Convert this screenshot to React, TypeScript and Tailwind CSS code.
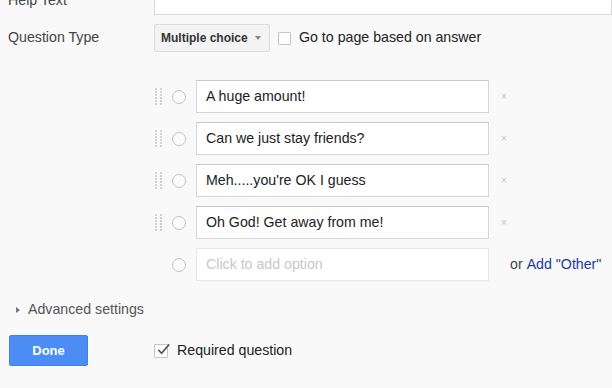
import React from "react";

function DragHandle() {
  const dots = Array.from({ length: 12 });
  return (
    <div className="grid grid-cols-2 gap-x-[3px] gap-y-[1px] w-[7px]">
      {dots.map((_, i) => (
        <span key={i} className="block w-[2px] h-[2px] bg-[#d3d3d3]" />
      ))}
    </div>
  );
}

function Radio() {
  return <span className="block w-[14px] h-[14px] rounded-full border border-[#c2c2c2] bg-[#fbfbfb]" />;
}

const options = [
  "A huge amount!",
  "Can we just stay friends?",
  "Meh.....you're OK I guess",
  "Oh God! Get away from me!",
];

export default function App() {
  return (
    <div
      className="w-[612px] h-[388px] overflow-hidden bg-[#f9f9f9] text-[14.2px] text-[#222]"
      style={{ fontFamily: '"Liberation Sans", Arial, sans-serif' }}
    >
      {/* Help text row */}
      <div className="flex items-center h-[28px] mt-[-13px]">
        <div className="w-[154px] pl-2 text-[#444]">Help Text</div>
        <div className="flex-1 h-[28px] bg-white border border-[#d9d9d9]" />
      </div>

      {/* Question type row */}
      <div className="flex items-center h-[28px] mt-[9px]">
        <div className="w-[154px] pl-2 text-[#444]">Question Type</div>
        <div className="flex items-center w-[116px] h-[28px] bg-[#f3f3f3] border border-[#dcdcdc] rounded-[2px] pl-[6px] pr-[8px]">
          <span className="font-bold text-[12px] text-[#333]">Multiple choice</span>
          <span className="ml-auto w-0 h-0 border-l-[3px] border-r-[3px] border-t-[4px] border-l-transparent border-r-transparent border-t-[#888]" />
        </div>
        <span className="ml-[8px] w-[13px] h-[13px] bg-white border border-[#c6c6c6] rounded-[1px]" />
        <span className="ml-[8px]">Go to page based on answer</span>
      </div>

      {/* Options */}
      <div className="mt-[28px] flex flex-col gap-[9px] pl-[155px]">
        {options.map((o) => (
          <div key={o} className="flex items-center h-[33px]">
            <DragHandle />
            <div className="ml-[10px]">
              <Radio />
            </div>
            <div className="ml-[10px] w-[293px] h-[33px] bg-white border border-[#d6d6d6] border-t-[#c8c8c8] flex items-center pl-[9px]">
              {o}
            </div>
            <span className="ml-[12px] text-[10px] leading-none text-[#c4c4c4]">×</span>
          </div>
        ))}
        <div className="flex items-center h-[33px]">
          <div className="ml-[17px]">
            <Radio />
          </div>
          <div className="ml-[10px] w-[293px] h-[33px] bg-white border border-[#e6e6e6] flex items-center pl-[9px] text-[#c8c8c8]">
            Click to add option
          </div>
          <span className="ml-[21px] text-[#444]">or</span>
          <span className="ml-[4px] text-[#23399b]">Add "Other"</span>
        </div>
      </div>

      {/* Advanced settings */}
      <div className="flex items-center mt-[19px] h-[20px] pl-[16px]">
        <span className="w-0 h-0 border-t-[3.5px] border-b-[3.5px] border-l-[4px] border-t-transparent border-b-transparent border-l-[#777]" />
        <span className="ml-[8px] text-[#555]">Advanced settings</span>
      </div>

      {/* Done row */}
      <div className="flex items-center mt-[15px]">
        <div className="ml-[9px] w-[79px] h-[31px] bg-[#4c8cf5] border border-[#3f7ff0] rounded-[2px] flex items-center justify-center text-white font-bold text-[13px]">
          Done
        </div>
        <span className="ml-[66px] w-[14px] h-[14px] bg-white border border-[#c6c6c6] rounded-[1px] relative">
          <svg viewBox="0 0 16 16" className="absolute left-[1px] top-[-3px] w-[15px] h-[15px]">
            <path d="M2.5 8.5 L6 12 L14 2.5" fill="none" stroke="#555" strokeWidth="1.8" />
          </svg>
        </span>
        <span className="ml-[9px]">Required question</span>
      </div>
    </div>
  );
}
